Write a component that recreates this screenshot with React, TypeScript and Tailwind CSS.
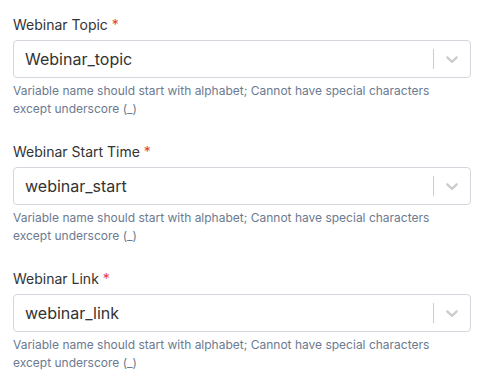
import React from "react";

type Field = { label: string; value: string };

const fields: Field[] = [
  { label: "Webinar Topic", value: "Webinar_topic" },
  { label: "Webinar Start Time", value: "webinar_start" },
  { label: "Webinar Link", value: "webinar_link" },
];

const Chevron = () => (
  <svg viewBox="0 0 20 20" className="h-5 w-5 fill-[#cccccc]" aria-hidden="true">
    <path d="M4.516 7.548c0.436-0.446 1.043-0.481 1.576 0l3.908 3.747 3.908-3.747c0.533-0.481 1.141-0.446 1.574 0 0.436 0.445 0.408 1.197 0 1.615-0.406 0.418-4.695 4.502-4.695 4.502-0.217 0.223-0.502 0.335-0.787 0.335s-0.57-0.112-0.789-0.335c0 0-4.287-4.084-4.695-4.502s-0.436-1.17 0-1.615z" />
  </svg>
);

const VariableField = ({ label, value }: Field) => (
  <div className="mb-6">
    <label className="block text-sm leading-5 text-[#333333] mb-[5px]">
      {label} <span className="text-[#e53e3e]">*</span>
    </label>
    <div className="flex h-[38px] items-center rounded border border-[#d4d7dd] bg-white">
      <div className="flex-1 pl-[11px] text-base text-[#333333]">{value}</div>
      <span className="h-5 w-px bg-[#cccccc]" />
      <div className="flex items-center px-2">
        <Chevron />
      </div>
    </div>
    <p className="mt-1 pr-8 text-xs leading-[18px] text-[#6b7a90]">
      Variable name should start with alphabet; Cannot have special characters except underscore (_)
    </p>
  </div>
);

export default function App() {
  return (
    <div className="h-[386px] w-[495px] overflow-hidden bg-white font-['Inter',sans-serif] flex flex-col">
      <div className="pl-[13px] pr-[24px] pt-[15px]">
        {fields.map((f) => (
          <VariableField key={f.label} {...f} />
        ))}
      </div>
      <div className="mt-auto h-[6px] border-t border-[#edf1f6] bg-[#f5f8fc]" />
    </div>
  );
}
